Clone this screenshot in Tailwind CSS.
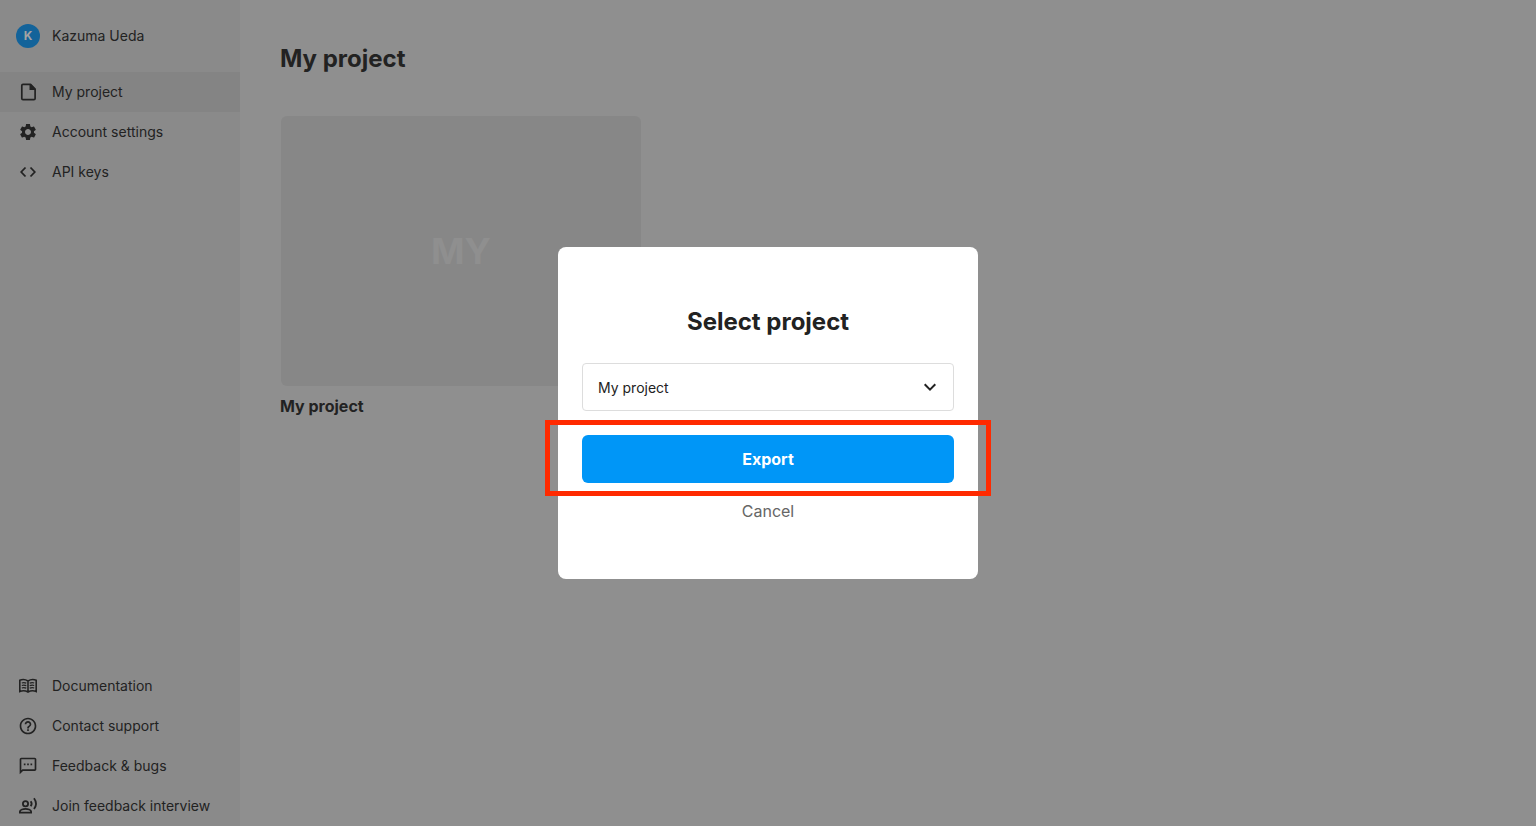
<!DOCTYPE html>
<html lang="en">
<head>
<meta charset="utf-8">
<title>My project</title>
<script src="https://cdn.jsdelivr.net/npm/@tailwindcss/browser@4"></script>
</head>
<body class="flex min-h-screen bg-[#8f8f8f] font-[Inter,sans-serif] text-[#222222]">
<aside class="flex w-60 shrink-0 flex-col bg-[#8a8a8a] text-sm">
  <div class="flex h-18 items-center gap-3 px-4">
    <span class="flex size-6 items-center justify-center rounded-full bg-[#13639a] text-xs font-bold text-[#a3a3a3]">K</span>
    <span>Kazuma Ueda</span>
  </div>
  <nav class="flex grow flex-col justify-between" aria-label="Main">
    <div>
      <a href="#" aria-current="page" class="flex h-10 items-center gap-3 bg-[#848484] px-4">
        <span class="flex size-6 items-center justify-center"><svg class="size-6" viewBox="0 0 24 24"><path d="M7 4.300h7.500L19.100 9v9.500c0 .7-.5 1.200-1.200 1.200H7c-.7 0-1.200-.5-1.200-1.200v-13c0-.7.5-1.200 1.200-1.200z" fill="none" stroke="currentColor" stroke-width="1.700" stroke-linejoin="round"/><path d="M13.500 4h1.300L19.600 9v1h-6.100z" fill="currentColor"/></svg></span>My project</a>
      <a href="#" class="flex h-10 items-center gap-3 px-4">
        <span class="flex size-6 items-center justify-center"><svg class="size-5" viewBox="0 0 24 24" fill="currentColor"><path d="M19.140 12.940c.04-.3.060-.610.060-.940 0-.320-.020-.640-.070-.940l2.030-1.580c.180-.140.230-.410.120-.610l-1.920-3.320c-.120-.220-.370-.290-.590-.220l-2.390.960c-.5-.380-1.030-.7-1.620-.940L14.400 2.810c-.040-.240-.240-.410-.480-.410h-3.840c-.240 0-.430.170-.470.410L9.250 5.350c-.590.240-1.130.570-1.620.940l-2.390-.960c-.220-.080-.470 0-.590.220L2.740 8.870c-.120.210-.080.470.120.610l2.030 1.580c-.050.300-.090.630-.090.940s.020.640.070.940l-2.030 1.580c-.180.140-.230.410-.120.610l1.920 3.320c.120.220.370.290.590.220l2.390-.960c.5.380 1.030.7 1.620.940l.360 2.540c.050.240.240.410.480.410h3.840c.240 0 .440-.170.470-.410l.360-2.540c.590-.240 1.130-.560 1.620-.940l2.390.960c.220.080.470 0 .590-.220l1.920-3.320c.120-.220.070-.470-.120-.610l-2.010-1.580zM12 15.600c-1.980 0-3.600-1.620-3.600-3.600s1.620-3.600 3.600-3.600 3.600 1.620 3.600 3.600-1.620 3.600-3.600 3.600z"/></svg></span>Account settings</a>
      <a href="#" class="flex h-10 items-center gap-3 px-4">
        <span class="flex size-6 items-center justify-center"><svg class="size-4" viewBox="0 0 16 16" fill="none" stroke="currentColor" stroke-width="1.800"><path d="M5.500 3.500 1.200 8l4.300 4.500M10.500 3.500 14.800 8l-4.300 4.500"/></svg></span>API keys</a>
    </div>
    <div>
      <a href="#" class="flex h-10 items-center gap-3 px-4">
        <span class="flex size-6 items-center justify-center"><svg class="size-5" viewBox="0 0 20 20" fill="none" stroke="currentColor" stroke-width="1.600"><path d="M10 5Q6 2.500 1.800 4.300V15.500Q6 13.800 10 16Q14 13.800 18.200 15.500V4.300Q14 2.500 10 5V16"/><path stroke-width="1.300" d="M3.800 7Q6 6.300 8.300 7.200M3.800 9.500Q6 8.800 8.300 9.700M3.800 12Q6 11.300 8.300 12.200M11.700 7.200Q14 6.300 16.200 7M11.700 9.700Q14 8.800 16.200 9.500M11.700 12.200Q14 11.300 16.200 12"/></svg></span>Documentation</a>
      <a href="#" class="flex h-10 items-center gap-3 px-4">
        <span class="flex size-6 items-center justify-center"><svg class="size-5" viewBox="0 0 24 24" fill="currentColor"><path d="M11 18h2v-2h-2v2zm1-16C6.480 2 2 6.480 2 12s4.480 10 10 10 10-4.480 10-10S17.520 2 12 2zm0 18c-4.410 0-8-3.590-8-8s3.590-8 8-8 8 3.590 8 8-3.590 8-8 8zm0-14c-2.210 0-4 1.790-4 4h2c0-1.100.9-2 2-2s2 .9 2 2c0 2-3 1.750-3 5h2c0-2.250 3-2.500 3-5 0-2.210-1.790-4-4-4z"/></svg></span>Contact support</a>
      <a href="#" class="flex h-10 items-center gap-3 px-4">
        <span class="flex size-6 items-center justify-center"><svg class="size-5" viewBox="0 0 24 24" fill="currentColor"><path d="M20 2H4c-1.100 0-2 .9-2 2v18l4-4h14c1.100 0 2-.9 2-2V4c0-1.100-.9-2-2-2zm0 14H5.200L4 17.200V4h16v12zM7 9h2v2H7zm4 0h2v2h-2zm4 0h2v2h-2z"/></svg></span>Feedback &amp; bugs</a>
      <a href="#" class="flex h-10 items-center gap-3 px-4">
        <span class="flex size-6 items-center justify-center"><svg class="size-6" viewBox="0 0 24 24" fill="none" stroke="currentColor" stroke-width="1.800"><circle cx="9.500" cy="9.800" r="2.600"/><path d="M3.900 18.600v-1c0-1.800 3.600-2.800 5.600-2.800s5.600 1 5.600 2.800v1zM14.700 7.200Q16.600 9.600 14.700 12.200M18 4.300Q22 9.800 18 15"/></svg></span>Join feedback interview</a>
    </div>
  </nav>
</aside>
<main class="grow px-10 pt-10">
  <h1 class="text-2xl leading-[38px] font-bold">My project</h1>
  <a href="#" class="mt-[38px] block w-[361px]">
    <span class="ml-px flex h-[270px] items-center justify-center rounded-md bg-[#878787] text-4xl font-bold text-[#8f8f8f]">MY</span>
    <span class="mt-2 block text-base font-bold">My project</span>
  </a>
</main>
<div class="fixed inset-0 flex items-center justify-center">
  <form role="dialog" aria-labelledby="dialog-title" class="flex w-[420px] flex-col rounded-lg bg-white px-6 py-14">
    <h2 id="dialog-title" class="text-center text-2xl leading-[38px] font-bold">Select project</h2>
    <div class="relative mt-[22px]">
      <select aria-label="Project" class="h-12 w-full appearance-none rounded border border-[#dddddd] bg-white px-[15px] pt-0.5 text-sm">
        <option>My project</option>
      </select>
      <svg class="pointer-events-none absolute top-3 right-3 size-6" viewBox="0 0 24 24" fill="none" stroke="currentColor" stroke-width="2"><path d="m6.700 9.300 5.300 5.300 5.300-5.300"/></svg>
    </div>
    <div class="relative mt-6">
      <button type="submit" class="h-12 w-full rounded-md bg-[#0096f7] text-base font-bold text-white">Export</button>
      <span class="pointer-events-none absolute -inset-x-[37px] -top-[15px] -bottom-[13px] border-5 border-[#ff2a00]"></span>
    </div>
    <button type="button" class="mt-4 self-center text-base text-[#666666]">Cancel</button>
  </form>
</div>
</body>
</html>
